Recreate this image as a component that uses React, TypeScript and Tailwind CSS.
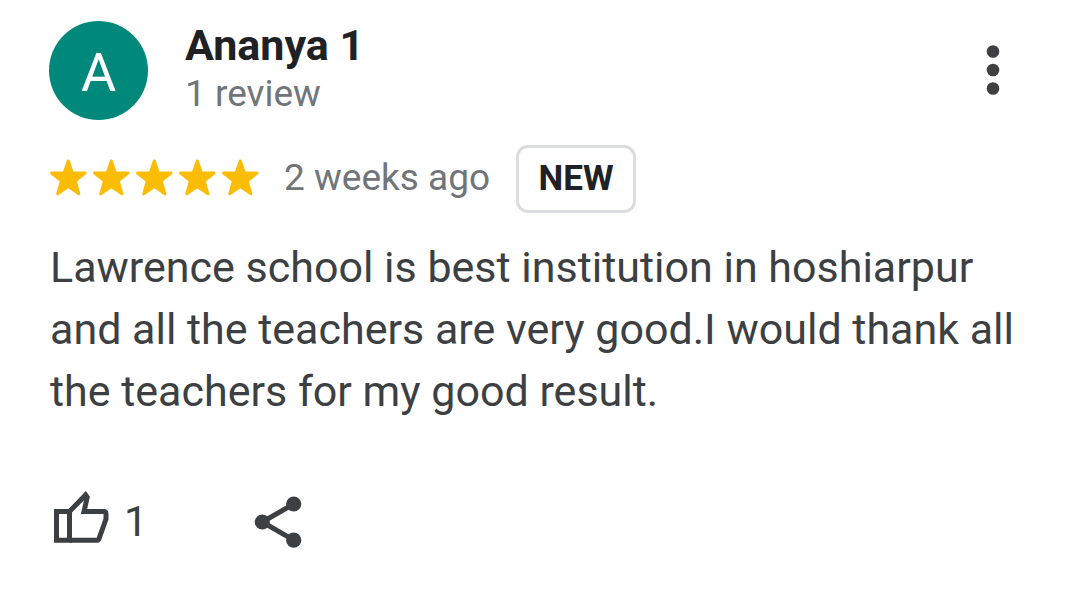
const STAR_COUNT = 5;

function MoreIcon() {
  return (
    <svg viewBox="0 0 14 52" className="h-[52px] w-[14px]" fill="currentColor" aria-hidden="true">
      <circle cx="7" cy="6.5" r="6.3" />
      <circle cx="7" cy="25" r="6.3" />
      <circle cx="7" cy="43.5" r="6.3" />
    </svg>
  );
}

function StarIcon() {
  return (
    <svg
      viewBox="0 0 39 38"
      className="h-[38px] w-[39px]"
      fill="currentColor"
      stroke="currentColor"
      strokeWidth="3"
      strokeLinejoin="round"
      aria-hidden="true"
    >
      <path d="M19.3 2 23.4 14H36L26.2 21.800 29.9 34.800 19.3 27.500 8.700 34.800 12.400 21.800 2.500 14H15.200z" />
    </svg>
  );
}

function ThumbUpIcon() {
  return (
    <svg
      viewBox="0 0 56 62"
      className="h-[62px] w-14"
      fill="none"
      stroke="currentColor"
      strokeWidth="5"
      aria-hidden="true"
    >
      <path d="M2.5 20.5H15.500V49.300H2.500z" />
      <path d="M15.5 20.5 31.6 4 33.2 6.300 30 20.500H49.500Q52 20.500 52 23V28L45 47.600Q44.400 49.300 42.500 49.300H15.500" />
    </svg>
  );
}

function ShareIcon() {
  return (
    <svg viewBox="0 0 48 52" className="h-[52px] w-12" fill="currentColor" aria-hidden="true">
      <path d="M39.7 8 8.3 26l31.4 18.2" fill="none" stroke="currentColor" strokeWidth="5" />
      <circle cx="39.7" cy="8" r="7.6" />
      <circle cx="8.3" cy="26" r="7.6" />
      <circle cx="39.7" cy="44.2" r="7.6" />
    </svg>
  );
}

export default function App() {
  return (
    <article className="min-h-screen bg-white px-[49px] pt-[21px] font-[Roboto,sans-serif] text-[#3c4043]">
      <header className="flex items-start">
        <div className="flex h-[99px] w-[99px] items-center justify-center rounded-full bg-[#00897b] pt-1 text-[54px] text-white">
          A
        </div>
        <div className="ml-[37px] flex-1">
          <h1 className="text-[43px] leading-[48px] font-bold text-[#202124]">Ananya 1</h1>
          <p className="text-[37px] leading-[50px] text-[#70757a]">1 review</p>
        </div>
        <button type="button" aria-label="More options" className="mt-6 mr-[31px]">
          <MoreIcon />
        </button>
      </header>

      <div className="mt-[25px] flex items-center">
        <div role="img" aria-label="5 out of 5 stars" className="flex gap-1 pb-0.5 text-[#fbbc04]">
          {Array.from({ length: STAR_COUNT }, (_, i) => (
            <StarIcon key={i} />
          ))}
        </div>
        <span className="ml-6 pb-0.5 text-[37px] leading-[50px] text-[#70757a]">2 weeks ago</span>
        <span className="ml-[26px] flex h-[68px] w-[120px] items-center justify-center rounded-xl border-3 border-[#dadce0] text-[35px] font-bold text-[#202124]">
          NEW
        </span>
      </div>

      <p className="mt-[23px] pl-px text-[43px] leading-[62px]">
        Lawrence school is best institution in hoshiarpur and all the teachers are very good.I would
        thank all the teachers for my good result.
      </p>

      <footer className="mt-[69px] flex items-center pl-[5px]">
        <button
          type="button"
          aria-label="Like, 1"
          className="flex items-center gap-[14px] text-[42px] leading-[62px]"
        >
          <ThumbUpIcon />
          <span>1</span>
        </button>
        <button type="button" aria-label="Share" className="ml-[106px]">
          <ShareIcon />
        </button>
      </footer>
    </article>
  );
}
